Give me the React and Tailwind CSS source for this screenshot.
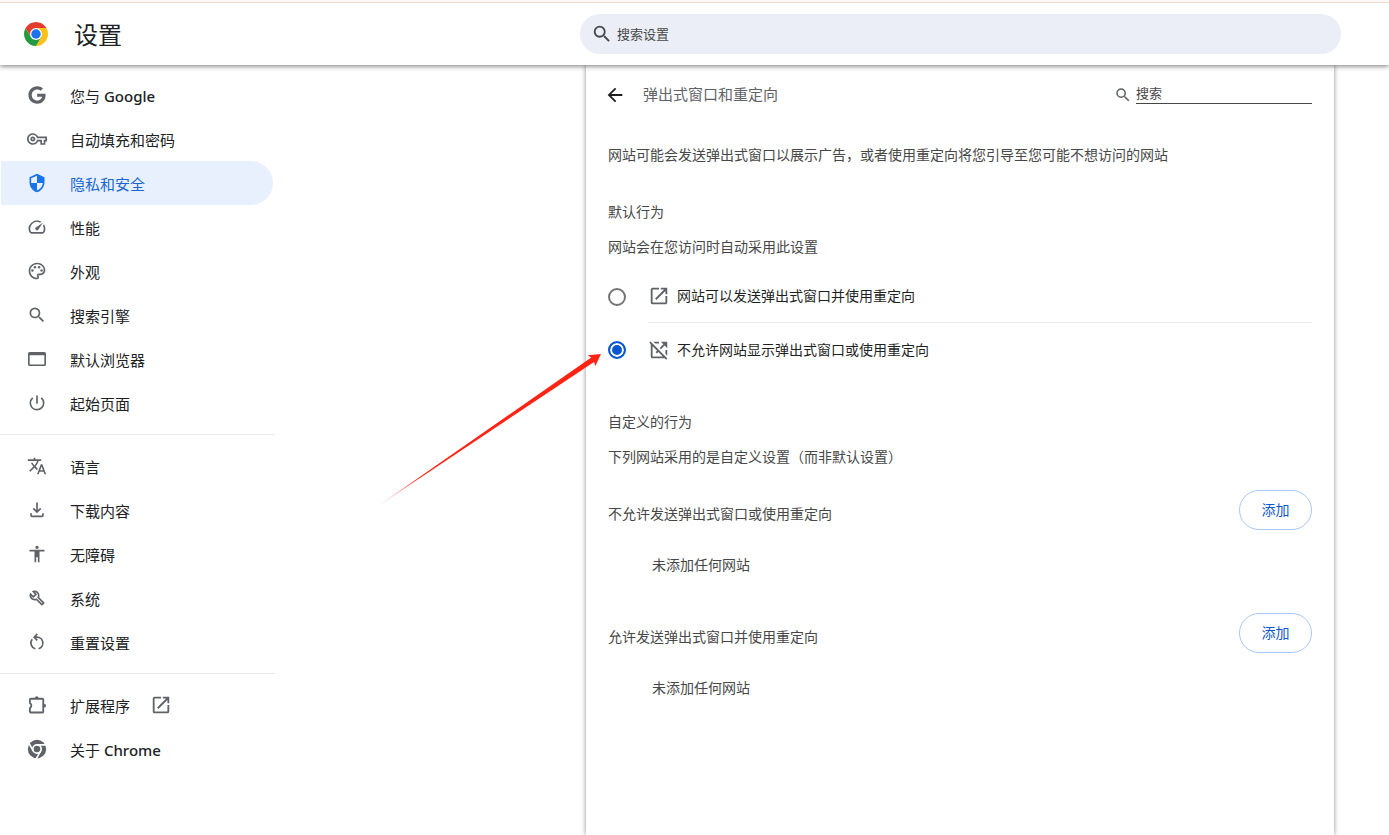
import React, { useState } from "react";
import { FaGoogle } from "react-icons/fa";
import {
  MdOutlineVpnKey,
  MdSecurity,
  MdSpeed,
  MdOutlinePalette,
  MdSearch,
  MdPowerSettingsNew,
  MdTranslate,
  MdAccessibility,
  MdOpenInNew,
  MdOpenInNewOff,
  MdArrowBack,
} from "react-icons/md";

function Svg({ children, className, viewBox = "0 0 24 24" }) {
  return (
    <svg viewBox={viewBox} fill="none" className={className} aria-hidden="true">
      {children}
    </svg>
  );
}

function GoogleIcon({ className }) {
  return (
    <span className={className}>
      <FaGoogle className="size-full p-px" />
    </span>
  );
}

function BrowserIcon({ className }) {
  return (
    <Svg className={className}>
      <path
        fill="currentColor"
        fillRule="evenodd"
        d="M3.200 3.500h17.600A2 2 0 0 1 22.800 5.500v13a2 2 0 0 1-2 2H3.200a2 2 0 0 1-2-2v-13a2 2 0 0 1 2-2zM3.200 7.500v11h17.600v-11z"
      />
    </Svg>
  );
}

function DownloadIcon({ className }) {
  return (
    <Svg className={className}>
      <path
        d="M12 3v11M7.500 10l4.500 4.500L16.500 10M4.800 16v2.300c0 .8.5 1.300 1.300 1.300h11.800c.8 0 1.300-.5 1.300-1.300V16"
        stroke="currentColor"
        strokeWidth="2"
      />
    </Svg>
  );
}

function WrenchIcon({ className }) {
  return (
    <Svg className={className} viewBox="0 -960 960 960">
      <path
        fill="currentColor"
        d="M686-132 444-376q-20 8-40.500 12t-43.500 4q-100 0-170-70t-70-170q0-36 10-68.500t28-61.500l146 146 72-72-146-146q29-18 61.500-28t68.500-10q100 0 170 70t70 170q0 23-4 43.500T584-516l244 242q12 12 12 29t-12 29l-84 84q-12 12-29 12t-29-12Zm29-85 27-27-256-256q18-20 26-46.500t8-53.500q0-60-38.500-104.500T386-758l74 74q12 12 12 28t-12 28L332-500q-12 12-28 12t-28-12l-74-74q9 57 53.500 95.500T360-440q26 0 53-8t47-25l255 256Z"
      />
    </Svg>
  );
}

function ResetIcon({ className }) {
  return (
    <Svg className={className}>
      <path
        d="M9 6.200h3A7.100 7.100 0 0 1 14 20.100M10 20.100A7.100 7.100 0 0 1 6.300 8.700M12.300 2.200 8.600 6.200l3.700 3.800"
        stroke="currentColor"
        strokeWidth="2"
      />
    </Svg>
  );
}

function ExtensionIcon({ className }) {
  return (
    <Svg className={className}>
      <path
        d="M4.500 4.500h14a1 1 0 0 1 1 1V20a1 1 0 0 1-1 1h-14a1 1 0 0 1-1-1v-4.200a3.600 3.600 0 0 0 0-6.200V5.500a1 1 0 0 1 1-1z"
        stroke="currentColor"
        strokeWidth="2.200"
      />
      <path d="M9.500 3.800a2.200 2.200 0 0 1 4.400 0zM20.500 10.500a2.300 2.300 0 0 1 0 4.600z" fill="currentColor" />
    </Svg>
  );
}

function ChromeMono({ className }) {
  return (
    <Svg className={className}>
      <circle cx="12" cy="12" r="11" fill="currentColor" />
      <circle cx="12" cy="12" r="5" stroke="#fff" strokeWidth="2" />
      <path d="M12 7h10.500M7.670 14.500 2.400 5.400M16.330 14.500 11.100 23.600" stroke="#fff" strokeWidth="2" />
    </Svg>
  );
}

function ChromeLogo({ className }) {
  return (
    <Svg viewBox="0 0 48 48" className={className}>
      <path fill="#e33b2e" d="M24 12h20.780A24 24 0 0 0 3.220 12l10.390 18z" />
      <path fill="#fbc116" d="M34.390 30 24 48a24 24 0 0 0 20.780-36H24z" />
      <path fill="#249a41" d="M13.610 30 3.220 12A24 24 0 0 0 24 48l10.390-18z" />
      <circle cx="24" cy="24" r="12" fill="#fff" />
      <circle cx="24" cy="24" r="9.500" fill="#1a73e8" />
    </Svg>
  );
}

const groups = [
  [
    { label: "您与", latin: "Google", Icon: GoogleIcon },
    { label: "自动填充和密码", Icon: MdOutlineVpnKey },
    { label: "隐私和安全", Icon: MdSecurity, active: true },
    { label: "性能", Icon: MdSpeed },
    { label: "外观", Icon: MdOutlinePalette },
    { label: "搜索引擎", Icon: MdSearch },
    { label: "默认浏览器", Icon: BrowserIcon },
    { label: "起始页面", Icon: MdPowerSettingsNew },
  ],
  [
    { label: "语言", Icon: MdTranslate },
    { label: "下载内容", Icon: DownloadIcon },
    { label: "无障碍", Icon: MdAccessibility },
    { label: "系统", Icon: WrenchIcon },
    { label: "重置设置", Icon: ResetIcon },
  ],
  [
    { label: "扩展程序", Icon: ExtensionIcon, external: true },
    { label: "关于", latin: "Chrome", Icon: ChromeMono },
  ],
];

function NavItem({ label, latin, Icon, active, external }) {
  return (
    <a
      href="#"
      aria-current={active ? "page" : undefined}
      className={
        active
          ? "ml-px mr-0.5 flex h-11 items-center rounded-r-full bg-[#e8f0fe] pl-[26px] text-[#1967d2]"
          : "ml-px mr-0.5 flex h-11 items-center rounded-r-full pl-[26px] text-[#202124]"
      }
    >
      <Icon className={active ? "size-5 shrink-0 text-[#1a73e8]" : "size-5 shrink-0 text-[#5f6368]"} />
      <span className="ml-[23px] pt-[3px]">
        {label}
        {latin && <span className="font-medium"> {latin}</span>}
      </span>
      {external && <MdOpenInNew className="ml-5 size-[22px] text-[#5f6368]" />}
    </a>
  );
}

function Header() {
  return (
    <header className="relative z-10 shrink-0 bg-white shadow-[0_1px_5px_rgba(0,0,0,0.55)]">
      <div className="h-[3px] border-b border-[#f6dccf] bg-[#fff7f3]" />
      <div className="flex h-[62px] items-center">
        <div className="flex w-[580px] shrink-0 items-center pl-6">
          <ChromeLogo className="size-6" />
          <h1 className="ml-[26px] pt-0.5 text-2xl text-[#202124]">设置</h1>
        </div>
        <label className="mr-12 flex h-10 flex-1 items-center rounded-full bg-[#ebeef7] pl-[11px]">
          <MdSearch className="size-[22px] text-[#474747]" />
          <input
            type="text"
            aria-label="搜索设置"
            placeholder="搜索设置"
            className="ml-1 min-w-0 flex-1 bg-transparent text-[13px] outline-none placeholder:text-[#474747]"
          />
        </label>
      </div>
    </header>
  );
}

function RadioRow({ id, label, Icon, checked, onChange, divider }) {
  return (
    <div className="flex items-center">
      <input
        type="radio"
        id={id}
        name="default-behavior"
        checked={checked}
        onChange={onChange}
        className="size-[18px] shrink-0 appearance-none rounded-full border-2 border-[#757575] bg-white checked:border-[#0b57d0] checked:bg-[#0b57d0] checked:shadow-[inset_0_0_0_2px_#fff]"
      />
      <label
        htmlFor={id}
        className={
          divider
            ? "ml-[22px] flex h-[53px] flex-1 items-center border-b border-[#ebebeb] text-[#1f1f1f]"
            : "ml-[22px] flex h-[53px] flex-1 items-center text-[#1f1f1f]"
        }
      >
        <Icon className="size-[22px] text-[#5f6368]" />
        <span className="ml-[7px]">{label}</span>
      </label>
    </div>
  );
}

function SiteList({ title }) {
  return (
    <section>
      <div className="flex items-center justify-between">
        <h3 className="pt-2">{title}</h3>
        <button
          type="button"
          className="h-10 w-[73px] rounded-full border border-[#a8c7fa] text-[#0b57d0]"
        >
          添加
        </button>
      </div>
      <p className="mt-[25px] pl-11">未添加任何网站</p>
    </section>
  );
}

function PointerArrow() {
  return (
    <svg
      viewBox="0 0 224 160"
      className="pointer-events-none absolute left-[103px] top-[285px] h-[160px] w-[224px]"
      aria-hidden="true"
    >
      <defs>
        <linearGradient id="arrow-fade" x1="0" y1="1" x2="1" y2="0">
          <stop offset="0" stopColor="#ff2314" stopOpacity="0.3" />
          <stop offset="0.2" stopColor="#ff2314" />
        </linearGradient>
      </defs>
      <path
        fill="url(#arrow-fade)"
        d="M0 156 L213.200 7.600 L209.700 5.300 L223 4 L217.300 16 L216 11.900 Z"
      />
    </svg>
  );
}

export default function App() {
  const [choice, setChoice] = useState("block");
  return (
    <div className="flex min-h-screen flex-col bg-white font-['Noto_Sans','Noto_Sans_CJK_SC',sans-serif] text-sm text-[#474747]">
      <Header />
      <div className="flex flex-1">
        <nav aria-label="设置" className="w-[275px] shrink-0 pt-2 text-[15px]">
          {groups.map((items, i) => (
            <div key={i} className={i > 0 ? "mt-[9px] border-t border-[#e8eaed] pt-[9px]" : ""}>
              {items.map((item) => (
                <NavItem key={item.label} {...item} />
              ))}
            </div>
          ))}
        </nav>
        <main className="relative flex flex-1 pl-[311px] pr-[55px]">
          <div className="min-w-0 flex-1 bg-white px-[22px] pt-2 shadow-[0_0_5px_rgba(0,0,0,0.45)]">
            <div className="flex h-11 items-center">
              <button type="button" aria-label="返回" className="-ml-1 text-[#1f1f1f]">
                <MdArrowBack className="size-[22px]" />
              </button>
              <h2 className="ml-[17px] flex-1 text-[15px] text-[#5f6368]">弹出式窗口和重定向</h2>
              <label className="flex items-center">
                <MdSearch className="size-[18px] text-[#5f6368]" />
                <input
                  type="text"
                  aria-label="搜索"
                  placeholder="搜索"
                  className="mb-1 ml-1 h-[22px] w-44 border-b border-[#474747] bg-transparent text-[13px] outline-none placeholder:text-[#474747]"
                />
              </label>
            </div>
            <p className="mt-7">
              网站可能会发送弹出式窗口以展示广告，或者使用重定向将您引导至您可能不想访问的网站
            </p>
            <h3 className="mt-[37px]">默认行为</h3>
            <p className="mb-[13px] mt-[15px]">网站会在您访问时自动采用此设置</p>
            <RadioRow
              id="allow"
              label="网站可以发送弹出式窗口并使用重定向"
              Icon={MdOpenInNew}
              checked={choice === "allow"}
              onChange={() => setChoice("allow")}
              divider
            />
            <RadioRow
              id="block"
              label="不允许网站显示弹出式窗口或使用重定向"
              Icon={MdOpenInNewOff}
              checked={choice === "block"}
              onChange={() => setChoice("block")}
            />
            <h3 className="mt-9">自定义的行为</h3>
            <p className="mb-[23px] mt-[15px]">下列网站采用的是自定义设置（而非默认设置）</p>
            <SiteList title="不允许发送弹出式窗口或使用重定向" />
            <div className="mt-[38px]">
              <SiteList title="允许发送弹出式窗口并使用重定向" />
            </div>
          </div>
          <PointerArrow />
        </main>
      </div>
    </div>
  );
}
